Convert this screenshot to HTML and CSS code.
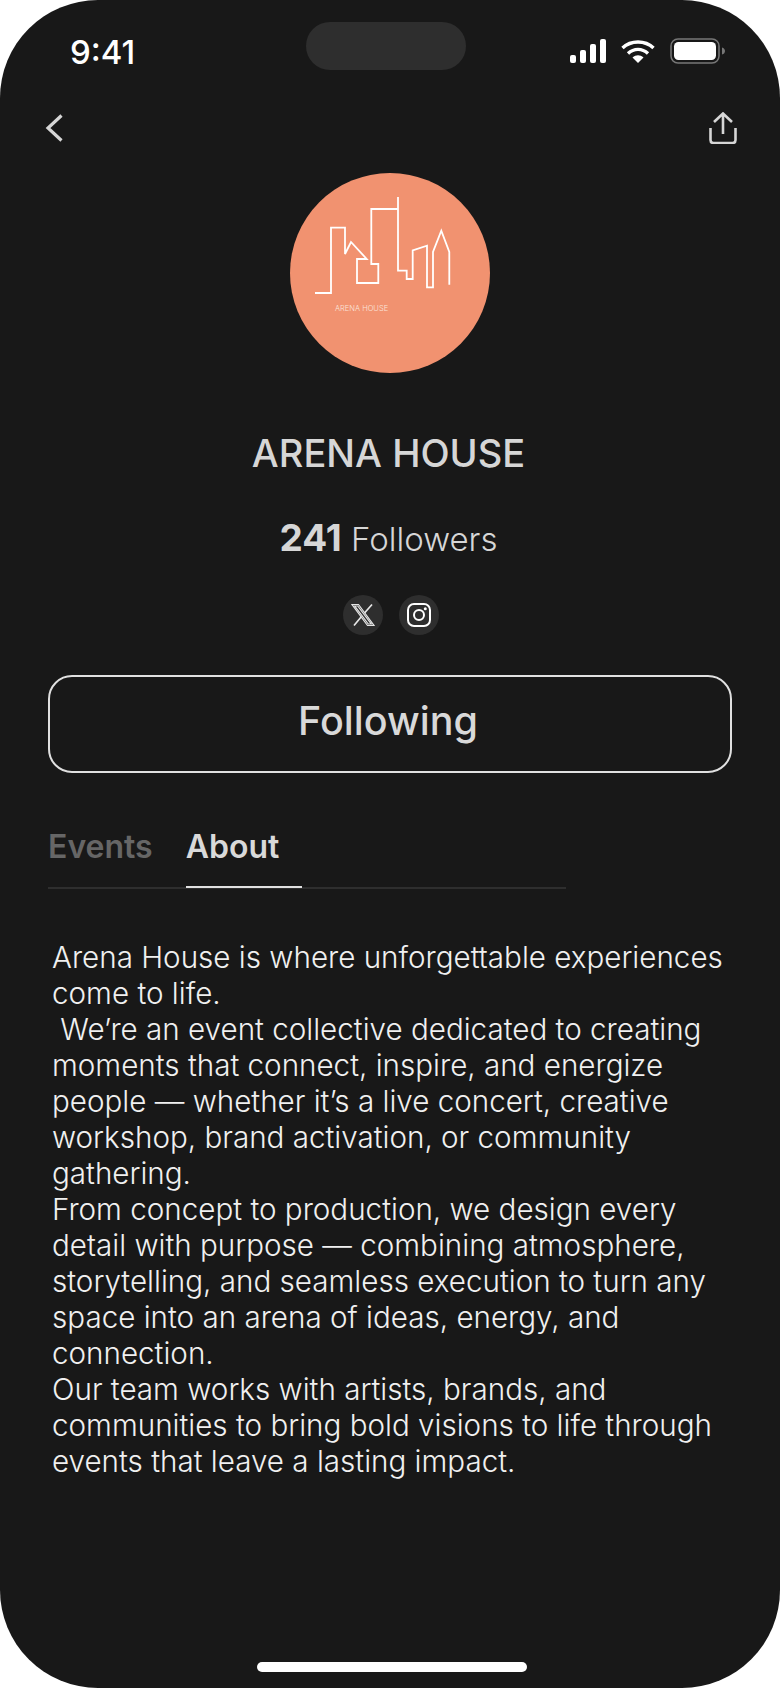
FILE: index.html
```html
<!DOCTYPE html>
<html lang="en">
<head>
<meta charset="utf-8">
<title>Arena House</title>
<link rel="stylesheet" href="styles.css">
</head>
<body>
<div class="screen">
  <div class="status_bar">
    <span class="time">9:41</span>
    <div class="island"></div>
    <div class="status_icons">
      <svg width="36" height="24" viewBox="0 0 36 24"><g fill="#fff"><rect x="0" y="16" width="6" height="8" rx="2"/><rect x="10" y="11" width="6" height="13" rx="2"/><rect x="20" y="5" width="6" height="19" rx="2"/><rect x="30" y="0" width="6" height="24" rx="2"/></g></svg>
      <svg width="34" height="24" viewBox="0 0 34 24"><path d="M1.500 9C10 1 24 1 32.500 9M7 14.500c6-5.500 14-5.500 20 0" fill="none" stroke="#fff" stroke-width="3.400"/><path d="M11.500 18.500c3.500-3 7.500-3 11 0L17 24z" fill="#fff"/></svg>
      <svg width="56" height="26" viewBox="0 0 56 26"><rect x="1" y="1" width="48" height="24" rx="7" fill="none" stroke="#777" stroke-width="1.500"/><rect x="4" y="4" width="42" height="18" rx="4.500" fill="#fff"/><path d="M52 9.500c2 .5 3 2 3 3.500s-1 3-3 3.500z" fill="#777"/></svg>
    </div>
  </div>

  <div class="top_nav">
    <svg width="20" height="30" viewBox="0 0 20 30"><path d="M17.500 2.500 4 15l13.500 12.500" fill="none" stroke="#d6d6d6" stroke-width="3.200"/></svg>
    <svg width="28" height="32" viewBox="0 0 28 32"><path d="M14 22V2M5 10l9-8.500L23 10M1.500 16v12c0 2 1 3 3 3h19c2 0 3-1 3-3V16" fill="none" stroke="#d6d6d6" stroke-width="2.600"/></svg>
  </div>

  <div class="profile">
    <svg class="logo" width="200" height="200" viewBox="0 0 200 200">
      <circle cx="100" cy="100" r="100" fill="#f19270"/>
      <path d="M25 120H41V54.700H55V81L61 69 76.700 86H67V110H88.300V91H81.300V36H108M108 24V97.700H116.700V106H122.700V77.300L137 72.700V114.300H143V79L151.300 57.700 159.300 79V111.700" fill="none" stroke="#fff" stroke-width="1.800"/>
      <text x="45" y="138" class="logo_text">ARENA HOUSE</text>
    </svg>
    <h1 class="name">ARENA HOUSE</h1>
    <p class="followers"><b>241</b> Followers</p>
    <div class="socials">
      <span class="social">
        <svg width="24" height="24" viewBox="0 0 24 24"><path d="M1 1.500h6.500l15.500 21h-6.500zM3.800 3h2.900l13.500 18h-2.900z" fill="none" stroke="#e6e6e6" stroke-width="1.200"/><path d="M21 1.500 13.500 10M10.500 13.500 3 22.500" fill="none" stroke="#e6e6e6" stroke-width="1.700"/></svg>
      </span>
      <span class="social">
        <svg width="24" height="24" viewBox="0 0 24 24"><rect x="1" y="1" width="22" height="22" rx="6" fill="none" stroke="#fff" stroke-width="2"/><circle cx="12" cy="12" r="5" fill="none" stroke="#fff" stroke-width="2"/><circle cx="18.300" cy="5.700" r="1.500" fill="#fff"/></svg>
      </span>
    </div>
  </div>

  <button class="follow_btn">Following</button>

  <ul class="tabs">
    <li>Events</li>
    <li class="active">About</li>
  </ul>

  <div class="about">
    <p>Arena House is where unforgettable experiences come to life.</p>
    <p>&nbsp;We’re an event collective dedicated to creating moments that connect, inspire, and energize people — whether it’s a live concert, creative workshop, brand activation, or community gathering.</p>
    <p>From concept to production, we design every detail with purpose — combining atmosphere, storytelling, and seamless execution to turn any space into an arena of ideas, energy, and connection.</p>
    <p>Our team works with artists, brands, and communities to bring bold visions to life through events that leave a lasting impact.</p>
  </div>

  <div class="home_bar"></div>
</div>
</body>
</html>
```

FILE: styles.css
```css
*{
	margin:0;
	padding:0;
	box-sizing:border-box;
}
body{
	background:#fff;
	width:780px;
	height:1688px;
	overflow:hidden;
	font-family:"Inter","Liberation Sans",sans-serif;
}
li{
	list-style:none;
}
.screen{
	position:relative;
	width:780px;
	height:1688px;
	background:#181818;
	border-radius:98px;
	overflow:hidden;
	padding:22px 48px 0;
	color:#d6d6d6;
}
.status_bar{
	display:flex;
	align-items:center;
	height:48px;
	padding-left:22px;
}
.time{
	color:#fff;
	font-size:33px;
	font-weight:500;
	width:236px;
	padding-top:12px;
}
.island{
	width:160px;
	height:48px;
	border-radius:24px;
	background:#2e2e2e;
}
.status_icons{
	display:flex;
	align-items:center;
	gap:15px;
	margin-left:auto;
	margin-right:6px;
	padding-top:10px;
}
.top_nav{
	display:flex;
	justify-content:space-between;
	align-items:center;
	margin:42px -5px 0 -4px;
	height:32px;
}
.profile{
	display:flex;
	flex-direction:column;
	align-items:center;
	margin-top:29px;
}
.logo{
	display:block;
}
.logo_text{
	font-size:7.500px;
	font-weight:300;
	fill:#fbe4da;
}
.name{
	font-size:38px;
	font-weight:500;
	line-height:46px;
	margin:57px 3px 0 0;
}
.followers{
	font-size:33px;
	font-weight:300;
	line-height:40px;
	margin:42px 3px 0 0;
}
.followers b{
	font-size:37px;
	font-weight:700;
}
.socials{
	display:flex;
	gap:16px;
	margin:36px 0 0 2px;
}
.social{
	display:flex;
	align-items:center;
	justify-content:center;
	width:40px;
	height:40px;
	border-radius:50%;
	background:#2e2e2e;
}
.follow_btn{
	display:block;
	width:684px;
	height:98px;
	margin-top:40px;
	padding:0 4px 6px 0;
	background:none;
	border:2px solid #e0e0e0;
	border-radius:24px;
	color:#d9d9d9;
	font-family:inherit;
	font-size:39.500px;
	font-weight:500;
}
.tabs{
	display:flex;
	gap:33px;
	width:518px;
	margin-top:55px;
	height:61px;
	border-bottom:2px solid #2e2e2e;
}
.tabs li{
	font-size:32px;
	font-weight:600;
	line-height:38px;
	color:#666;
}
.tabs li.active{
	color:#d9d9d9;
	width:116px;
	height:60px;
	border-bottom:2px solid #e0e0e0;
}
.about{
	margin-top:50px;
	padding-left:4px;
	font-size:29.600px;
	font-weight:300;
	line-height:36px;
	color:#f0f0f0;
}
.home_bar{
	position:absolute;
	left:257px;
	bottom:16px;
	width:270px;
	height:10px;
	border-radius:5px;
	background:#fff;
}
```
